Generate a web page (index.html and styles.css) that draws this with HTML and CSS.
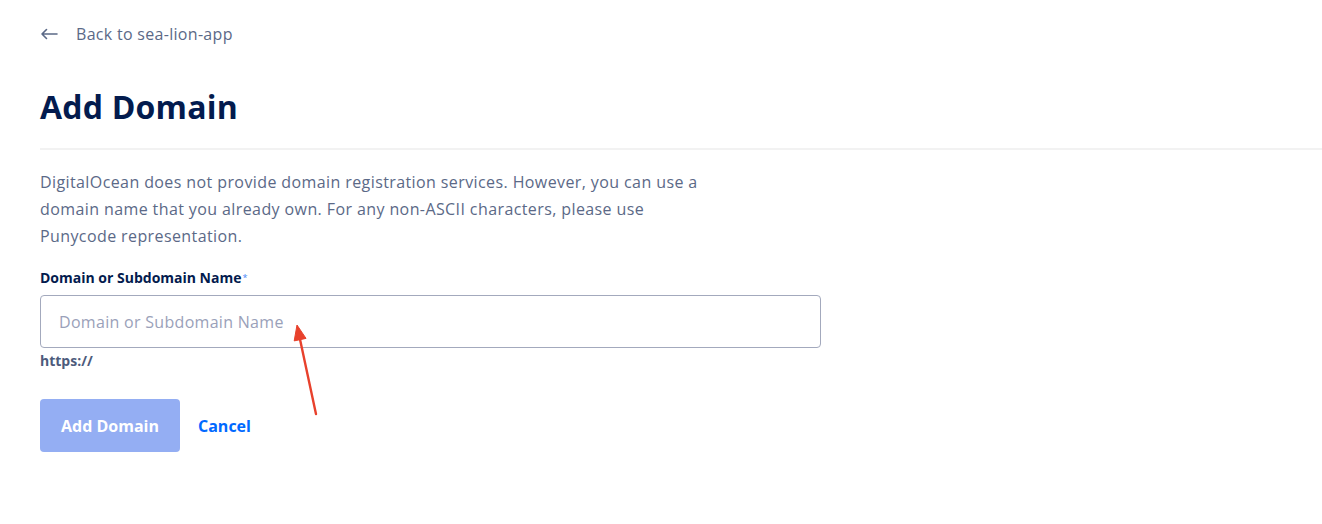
FILE: index.html
```html
<!DOCTYPE html>
<html lang="en">
<head>
<meta charset="utf-8">
<title>Add Domain</title>
<link rel="stylesheet" href="styles.css">
</head>
<body>
<div class="page">
  <a class="back" href="#">
    <svg class="back-icon" width="18" height="12" viewBox="0 0 18 12"><path d="M17 6H2M6.5 1.5L2 6l4.5 4.5" fill="none" stroke="#5b6987" stroke-width="1.6" stroke-linecap="round" stroke-linejoin="round"/></svg>
    <span>Back to sea-lion-app</span>
  </a>
  <h1 class="title">Add Domain</h1>
  <hr class="divider">
  <p class="intro">DigitalOcean does not provide domain registration services. However, you can use a domain name that you already own. For any non-ASCII characters, please use Punycode representation.</p>
  <form class="form">
    <label class="label" for="domain">Domain or Subdomain Name<span class="req">*</span></label>
    <div class="field">
      <input id="domain" class="input" type="text" placeholder="Domain or Subdomain Name">
      <svg class="annot" width="32" height="100" viewBox="0 0 32 100"><path d="M9.1 18.7L25 93" stroke="#e8412c" stroke-width="2.4" stroke-linecap="round"/><path d="M6 4L15 17.4L3.2 19.9Z" fill="#e8412c" stroke="#e8412c" stroke-width="1" stroke-linejoin="round"/></svg>
    </div>
    <div class="hint">https://</div>
    <div class="actions">
      <button class="btn" type="button" disabled>Add Domain</button>
      <a class="cancel" href="#">Cancel</a>
    </div>
  </form>
</div>
</body>
</html>
```
FILE: styles.css
```css
* { box-sizing: border-box; }
html, body { margin: 0; padding: 0; background: #fff; }
body { font-family: "Open Sans", Lato, sans-serif; color: #5b6987; }
.page { padding: 23px 0 0 40px; }
.back { display: flex; align-items: center; gap: 18px; text-decoration: none; color: #5b6987; font-size: 16px; height: 22px; letter-spacing: 0.3px; }
.back-icon { display: block; }
.title { margin: 42px 0 0; font-size: 32px; font-weight: 700; color: #031b4e; line-height: 40px; letter-spacing: 0.2px; }
.divider { margin: 21px 0 0; border: 0; height: 2px; background: #f2f2f2; }
.intro { margin: 19px 0 0; width: 670px; font-size: 16px; line-height: 27px; color: #5b6987; letter-spacing: 0.4px; }
.form { margin-top: 19px; }
.label { display: block; font-size: 14px; font-weight: 700; color: #031b4e; line-height: 18px; }
.req { color: #4a86f7; font-size: 9px; font-weight: 400; vertical-align: top; margin-left: 1px; }
.field { position: relative; margin-top: 8px; width: 781px; }
.input { display: block; width: 781px; height: 53px; border: 1px solid #a3a9bd; border-radius: 4px; padding: 0 18px; font-family: inherit; font-size: 16px; color: #031b4e; outline: none; letter-spacing: 0.3px; }
.input::placeholder { color: #9aa1b9; }
.annot { position: absolute; left: 251px; top: 26px; overflow: visible; }
.hint { margin-top: 3px; font-size: 14px; font-weight: 700; color: #4d5b7c; }
.actions { display: flex; align-items: center; gap: 18px; margin-top: 29px; }
.btn { width: 140px; height: 53px; border: 0; border-radius: 4px; background: #94aef3; color: #fff; font-family: inherit; font-size: 16px; font-weight: 700; }
.cancel { color: #0069ff; font-size: 16px; font-weight: 700; text-decoration: none; }
```
